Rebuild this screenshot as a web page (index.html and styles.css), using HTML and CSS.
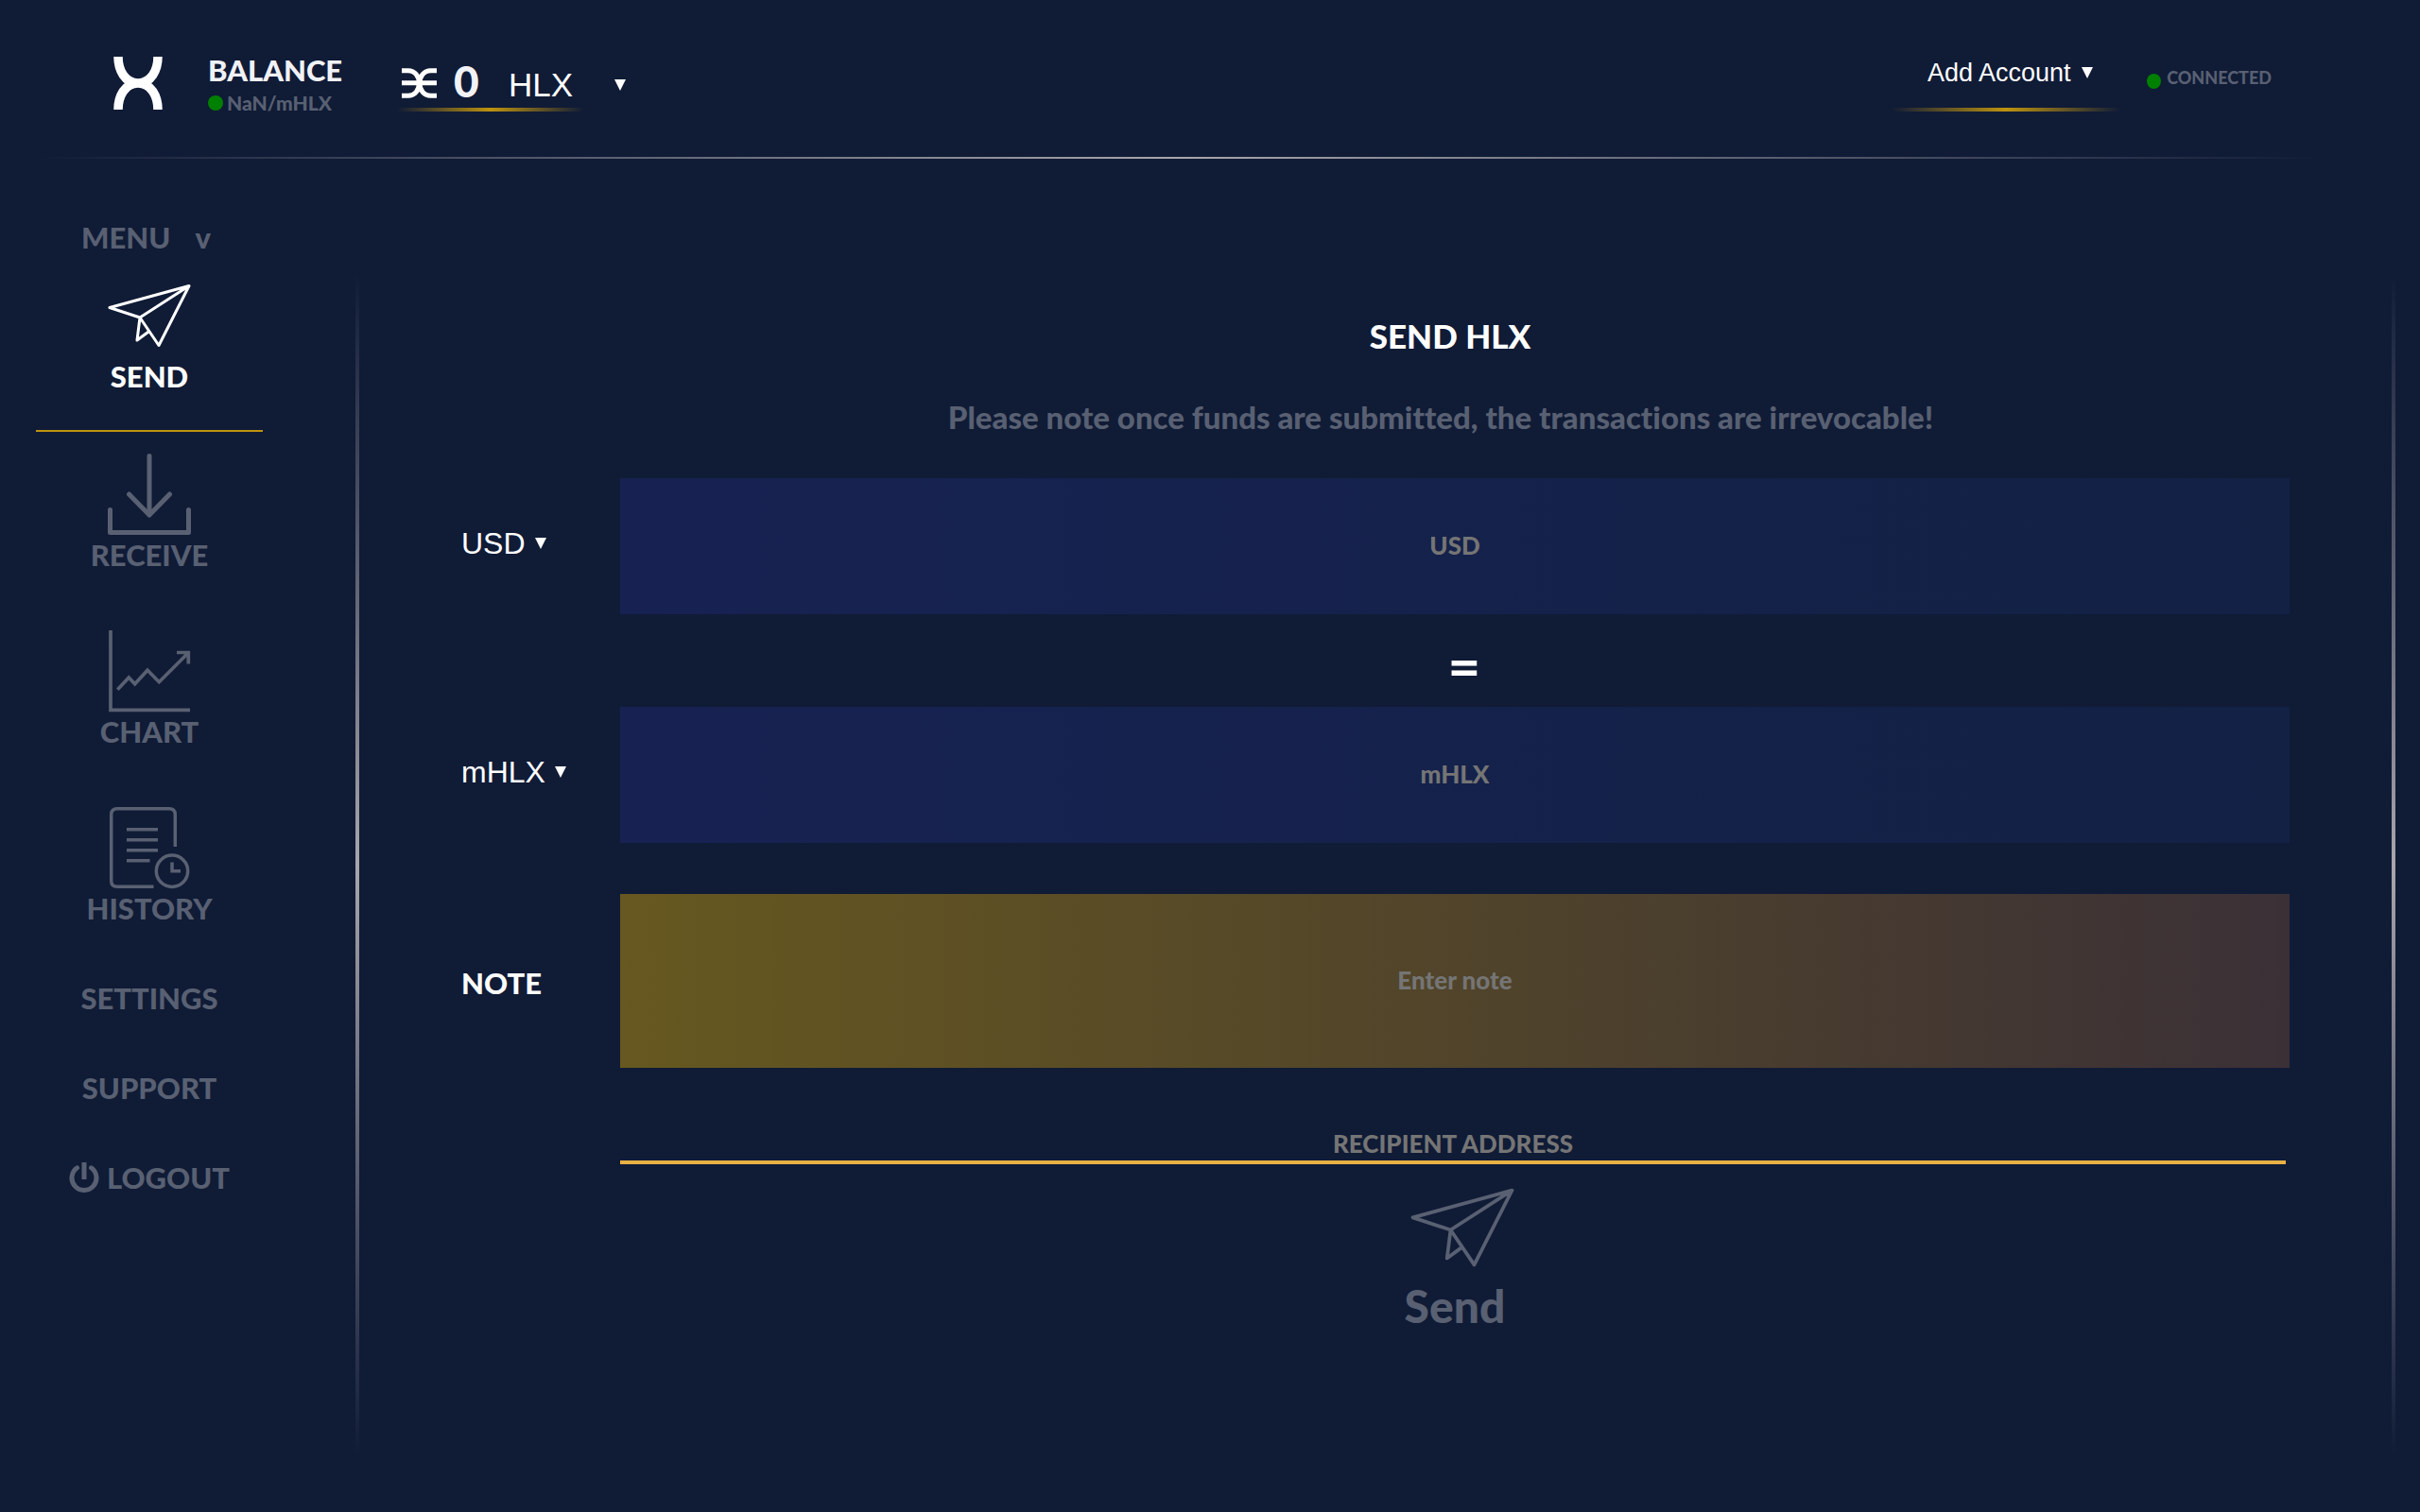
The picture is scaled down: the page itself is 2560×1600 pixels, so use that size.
FILE: index.html
```html
<!DOCTYPE html>
<html lang="en">
<head>
<meta charset="utf-8">
<title>Send HLX</title>
<link rel="stylesheet" href="styles.css">
</head>
<body>
<svg class="defs" aria-hidden="true">
  <symbol id="plane" viewBox="0 0 88 88">
    <path d="M86 12.5 2 35.5 34 46ZM34 46 54 75.500 86 12.500M34 46 31 70 42.500 61.500" fill="none" stroke="currentColor" stroke-width="3" stroke-linecap="round" stroke-linejoin="round"/>
  </symbol>
</svg>

<header class="topbar">
  <svg class="logo" viewBox="0 0 52 56" role="img" aria-label="Helix">
    <path d="M5 0C5 14 12 28 26 28S47 14 47 0M5 56C5 42 12 28 26 28S47 42 47 56" fill="none" stroke="#fff" stroke-width="9.500"/>
  </svg>
  <div class="balance">
    <strong class="balance-title">BALANCE</strong>
    <span class="balance-rate"><i class="dot"></i>NaN/mHLX</span>
  </div>
  <div class="amount">
    <div class="amount-main underlined">
      <svg class="coin" viewBox="0 0 111 96" aria-hidden="true">
        <path d="M0 8H20C42 8 55 26 55 48S42 88 20 88H0M111 8H92C70 8 57 26 57 48S70 88 92 88H111M0 47H111" fill="none" stroke="#fff" stroke-width="15"/>
      </svg>
      <span class="amount-value">0</span>
      <select class="picker picker-large" id="unit" aria-label="Balance unit"><option>HLX</option></select>
    </div>
    <label class="arrow" for="unit"></label>
  </div>
  <div class="account underlined">
    <select class="picker picker-small" id="account" aria-label="Account"><option>Add Account</option></select>
    <label class="arrow" for="account"></label>
  </div>
  <div class="status"><i class="dot"></i>CONNECTED</div>
</header>

<div class="layout">
  <nav class="sidebar">
    <button class="menu-toggle" type="button"><span>MENU</span><span>v</span></button>
    <a class="nav-item active" href="#send"><svg class="nav-icon"><use href="#plane"/></svg><span>SEND</span></a>
    <a class="nav-item" href="#receive">
      <svg class="nav-icon" viewBox="0 0 88 88"><path d="M44 3.500V66M22.500 44 44 66 65.500 44M2.500 60.500V84.500H85.500V60.500" fill="none" stroke="currentColor" stroke-width="5" stroke-linecap="round" stroke-linejoin="round"/></svg>
      <span>RECEIVE</span>
    </a>
    <a class="nav-item" href="#chart">
      <svg class="nav-icon" viewBox="0 0 88 88"><path d="M3 1V85.300H87M10.300 63.700 22.300 51 28.700 57.700 42 43.300 54.300 55.700 85 25M73 24.500H85.300V36.500" fill="none" stroke="currentColor" stroke-width="3.700"/></svg>
      <span>CHART</span>
    </a>
    <a class="nav-item" href="#history">
      <svg class="nav-icon" viewBox="0 0 88 88"><path d="M71.300 43V9Q71.300 2.700 65 2.700H10Q3.700 2.700 3.700 9V79Q3.700 85.300 10 85.300H48.500M20 24.700H53M20 35.700H53M20 46.700H53M20 57.700H44.500M68 59.500V68.700H77" fill="none" stroke="currentColor" stroke-width="3.500"/><circle cx="68" cy="68.700" r="16.700" fill="none" stroke="currentColor" stroke-width="3.500"/></svg>
      <span>HISTORY</span>
    </a>
    <a class="nav-item" href="#settings"><span>SETTINGS</span></a>
    <a class="nav-item" href="#support"><span>SUPPORT</span></a>
    <a class="nav-item logout" href="#logout">
      <svg class="power" viewBox="0 0 32 32"><path d="M8.500 5.800A13 13 0 1 0 23.500 5.800" fill="none" stroke="currentColor" stroke-width="5" stroke-linecap="round"/><path d="M16 0V18" stroke="currentColor" stroke-width="5"/></svg>
      <span>LOGOUT</span>
    </a>
  </nav>

  <main class="panel">
    <form class="send-form">
      <h1 class="title">SEND HLX</h1>
      <p class="warning">Please note once funds are submitted, the transactions are irrevocable!</p>

      <div class="side">
        <select class="picker" id="from" aria-label="From unit"><option>USD</option></select>
        <label class="arrow" for="from"></label>
      </div>
      <input class="field" type="text" placeholder="USD" aria-label="Amount in USD">

      <div class="equals">=</div>

      <div class="side">
        <select class="picker" id="to" aria-label="To unit"><option>mHLX</option></select>
        <label class="arrow" for="to"></label>
      </div>
      <input class="field" type="text" placeholder="mHLX" aria-label="Amount in mHLX">

      <label class="note-label" for="note">NOTE</label>
      <textarea class="field note" id="note" placeholder="Enter note"></textarea>

      <input class="recipient" type="text" placeholder="RECIPIENT ADDRESS" aria-label="Recipient address">

      <button class="send" type="submit"><svg class="send-icon"><use href="#plane"/></svg><span>Send</span></button>
    </form>
  </main>
</div>
</body>
</html>
```
FILE: styles.css
```css
:root {
  --bg: #101b36;
  --dim: #586072;
  --gold: #be930f;
  --line: #a8a6ac;
}

* {
  box-sizing: border-box;
}

body {
  margin: 0;
  background: var(--bg);
  color: #fff;
  font: 900 31px/32px Lato, "Liberation Sans", sans-serif;
  font-variant-ligatures: none;
}

button,
input,
textarea,
select {
  margin: 0;
  padding: 0;
  border: 0;
  border-radius: 0;
  outline: 0;
  background: none;
  color: inherit;
  font: inherit;
}

a {
  color: inherit;
  text-decoration: none;
}

.defs {
  display: none;
}

/* Top bar */
.topbar {
  display: flex;
  align-items: flex-start;
  height: 168px;
  margin: 0 104px 0 40px;
  padding: 58px 53px 0 80px;
  background: linear-gradient(90deg, transparent, var(--line), transparent) bottom / 100% 2px no-repeat;
}

.logo {
  width: 52px;
  height: 56px;
  margin: 2px 48px 0 0;
}

.balance {
  display: flex;
  flex-direction: column;
  gap: 7px;
  width: 200px;
  color: #f1f2f6;
}

.balance-title {
  font-weight: inherit;
}

.balance-rate,
.status {
  display: flex;
  align-items: center;
  color: var(--dim);
}

.balance-rate {
  gap: 4px;
  font-size: 21px;
  line-height: 24px;
}

.dot {
  width: 16px;
  height: 16px;
  border-radius: 50%;
  background: green;
}

.underlined {
  display: flex;
  align-items: center;
  height: 60px;
  background: linear-gradient(90deg, transparent, var(--gold), transparent) bottom / 100% 4px no-repeat;
}

.amount {
  display: flex;
  align-items: center;
  gap: 32px;
}

.amount-main {
  width: 198px;
  padding-left: 5px;
}

.coin {
  width: 37px;
  height: 32px;
  margin-right: 18px;
}

.amount-value {
  width: 58px;
  padding-bottom: 4px;
  color: #f1f2f6;
  font-size: 46px;
}

.picker {
  appearance: none;
  font: 32px/40px "Liberation Sans", Arial, sans-serif;
}

.picker option {
  color: #000;
}

.picker-large {
  padding-top: 3px;
  font-size: 35px;
}

.picker-small {
  font-size: 27px;
}

.arrow {
  width: 12px;
  height: 12px;
  background: #fff;
  clip-path: polygon(0 0, 100% 0, 50% 100%);
}

.amount > .arrow {
  margin-top: 4px;
}

.account {
  gap: 9px;
  width: 242px;
  margin-left: auto;
  padding: 0 0 22px 38px;
}

.status {
  gap: 6px;
  width: 132px;
  margin: 12px 0 0 28px;
  font-size: 18px;
  line-height: 24px;
}

.status .dot {
  margin-top: 8px;
}

/* Page body */
.layout {
  display: grid;
  grid-template-columns: 240px 1fr;
  column-gap: 98px;
  padding: 67px 26px 0 38px;
}

.sidebar {
  display: flex;
  flex-direction: column;
  color: var(--dim);
}

.menu-toggle {
  display: flex;
  gap: 26px;
  padding-left: 48px;
}

.nav-item {
  display: flex;
  flex-direction: column;
  align-items: center;
  gap: 4px;
  padding: 22px 0 41px;
}

.active {
  padding-top: 23px;
  color: #fff;
  border-bottom: 2px solid var(--gold);
}

.nav-icon {
  width: 88px;
  height: 88px;
}

.logout {
  flex-direction: row;
  justify-content: center;
  gap: 8px;
}

.power {
  width: 32px;
  height: 32px;
}

.panel {
  min-height: calc(100vh - 350px);
  margin-top: 55px;
  padding: 45px 112px 60px;
  background:
    linear-gradient(transparent, var(--line), transparent) left / 4px 100% no-repeat,
    linear-gradient(transparent, var(--line), transparent) right / 4px 100% no-repeat;
}

.send-form {
  display: grid;
  grid-template-columns: 168px 1fr;
}

.title,
.warning,
.equals,
.recipient,
.send {
  grid-column: 2;
  text-align: center;
}

.title {
  margin: 0 10px 46px 0;
  font-size: 35px;
  font-weight: inherit;
  line-height: 40px;
}

.warning {
  margin: 0 30px 45px 0;
  color: var(--dim);
  font-size: 33px;
  line-height: 40px;
}

.side {
  display: flex;
  align-items: center;
  gap: 10px;
  padding-bottom: 6px;
}

.field {
  width: 100%;
  height: 144px;
  padding-bottom: 2px;
  background: linear-gradient(90deg, #172252, #122144);
  font-size: 26px;
  text-align: center;
}

.field::placeholder,
.recipient::placeholder {
  color: #757575;
  opacity: 1;
}

.equals {
  height: 98px;
  padding: 5px 0 0 20px;
  font-size: 60px;
  font-weight: 700;
  line-height: 98px;
}

.note-label {
  align-self: center;
  margin-top: 58px;
}

.note {
  height: 184px;
  margin-top: 54px;
  padding-top: 75px;
  background: linear-gradient(90deg, #66581f, #3b3036);
  resize: none;
}

.recipient {
  height: 40px;
  margin: 62px 4px 0 0;
  border-bottom: 4px solid #e9b044;
  font-size: 26px;
}

.send {
  display: flex;
  flex-direction: column;
  align-items: center;
  justify-self: center;
  margin-top: 12px;
  color: var(--dim);
  font-size: 48px;
  line-height: 56px;
}

.send-icon {
  width: 110px;
  height: 110px;
  margin-left: 16px;
}
```
